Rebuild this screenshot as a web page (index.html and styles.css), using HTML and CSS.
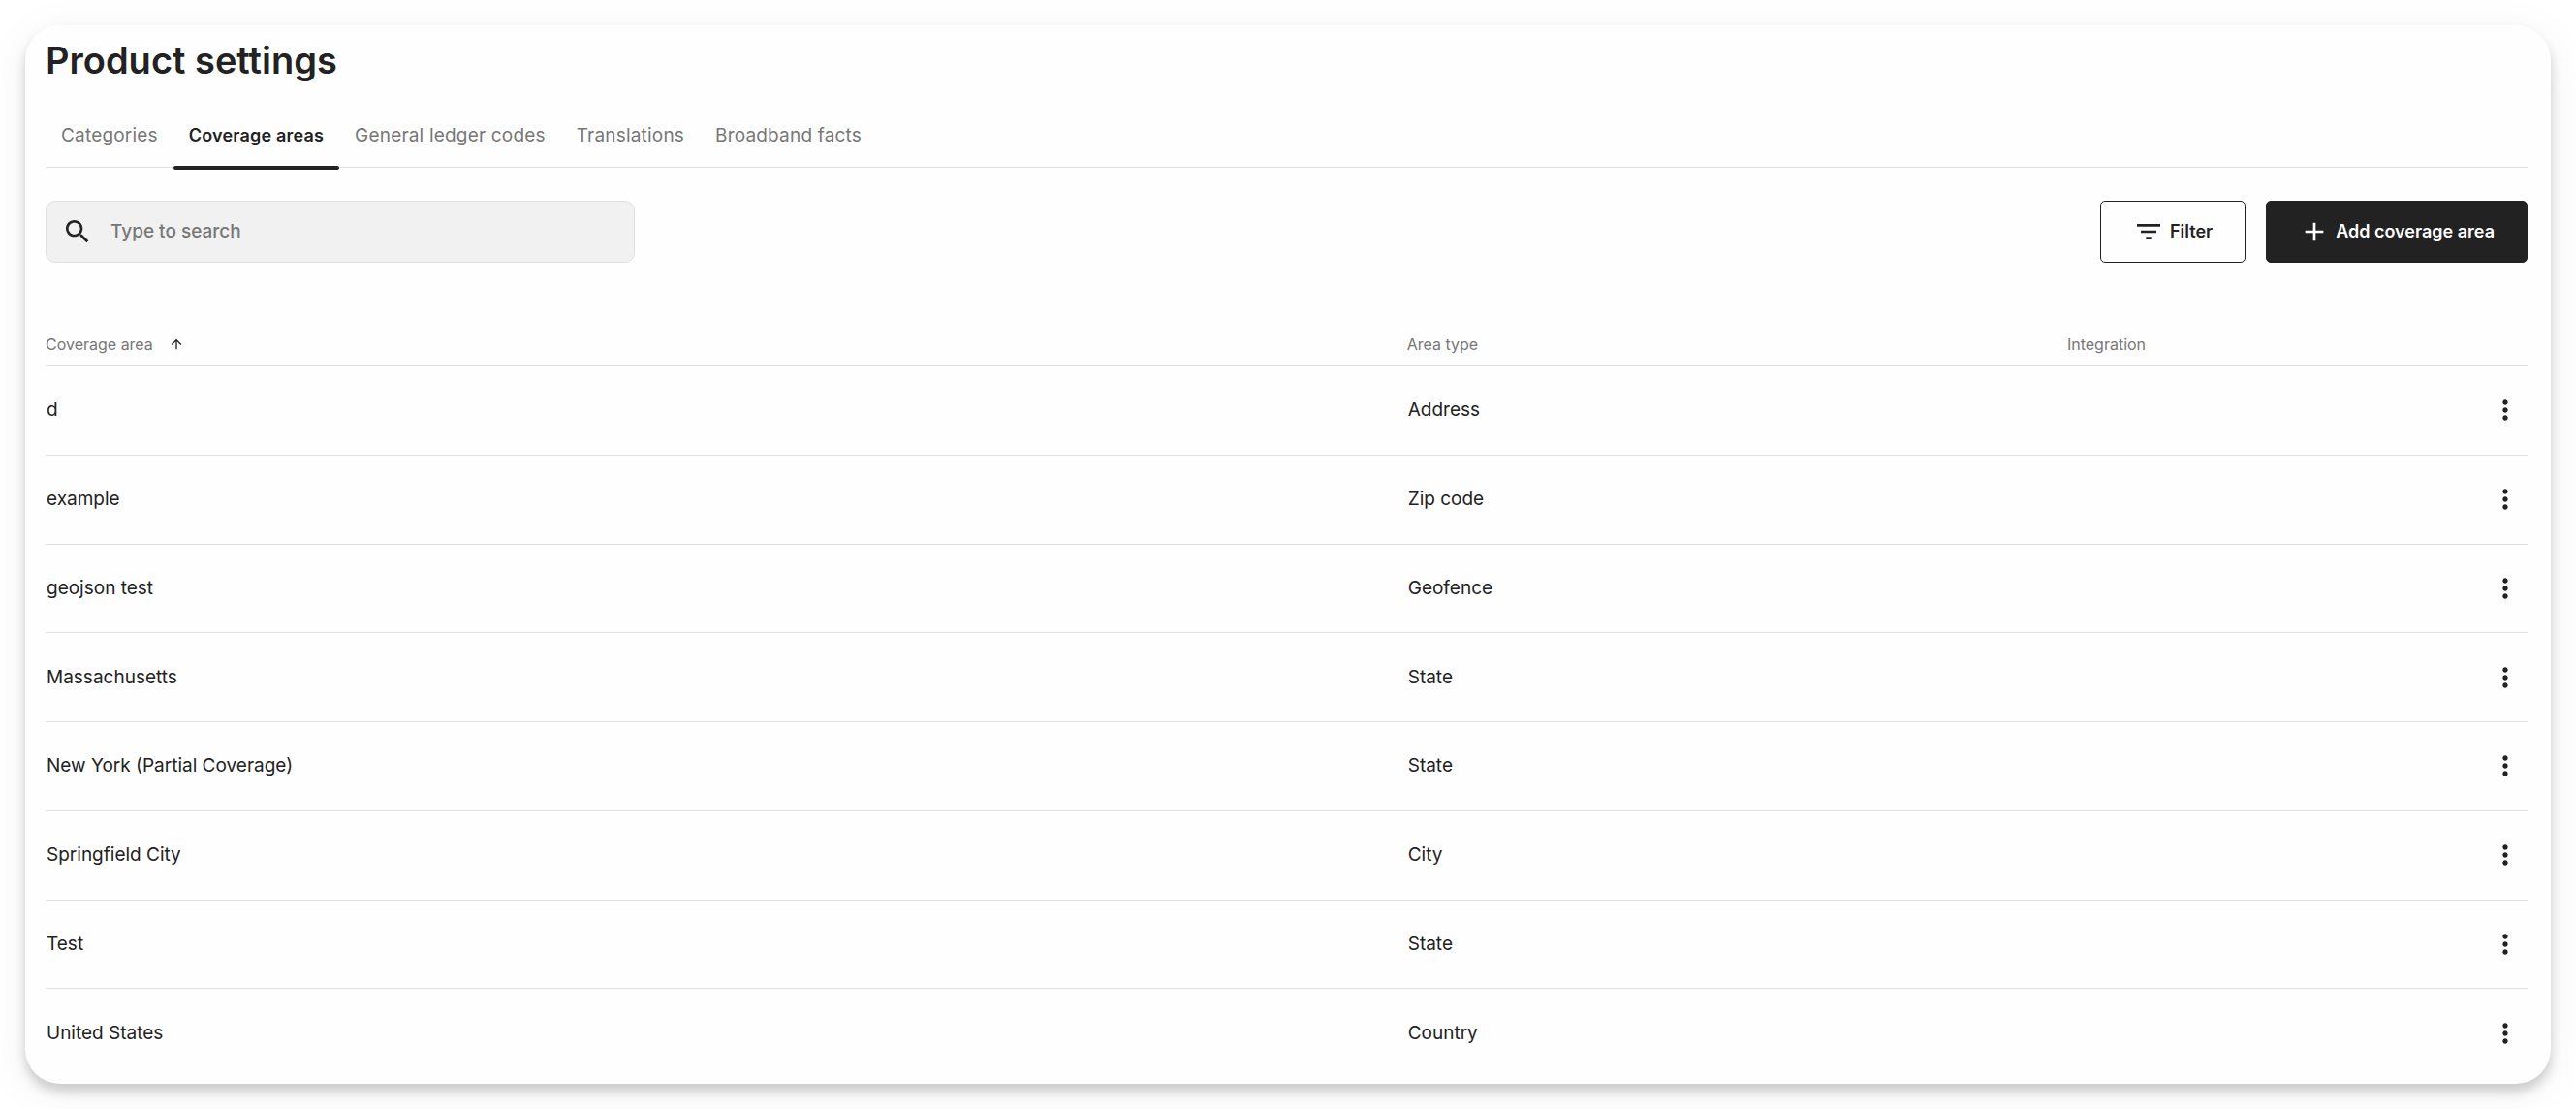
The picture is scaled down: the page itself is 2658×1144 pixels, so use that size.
FILE: index.html
```html
<!DOCTYPE html>
<html lang="en">
<head>
<meta charset="utf-8">
<title>Product settings</title>
<link rel="stylesheet" href="styles.css">
</head>
<body>
<svg class="sprite" aria-hidden="true">
  <symbol id="more" viewBox="0 0 24 24"><path d="M12 8c1.100 0 2-.9 2-2s-.9-2-2-2-2 .9-2 2 .9 2 2 2zm0 2c-1.100 0-2 .9-2 2s.9 2 2 2 2-.9 2-2-.9-2-2-2zm0 6c-1.100 0-2 .9-2 2s.9 2 2 2 2-.9 2-2-.9-2-2-2z"/></symbol>
</svg>
<main class="card">
  <h1 class="title">Product settings</h1>
  <nav class="tabs" aria-label="Product settings">
    <a class="tab" href="#categories">Categories</a>
    <a class="tab tab-active" href="#coverage" aria-current="page">Coverage areas</a>
    <a class="tab" href="#ledger">General ledger codes</a>
    <a class="tab" href="#translations">Translations</a>
    <a class="tab" href="#broadband">Broadband facts</a>
  </nav>
  <div class="toolbar">
    <label class="search">
      <svg class="icon" viewBox="0 0 24 24" aria-hidden="true"><path d="M15.500 14h-.79l-.28-.27C15.410 12.590 16 11.110 16 9.500 16 5.910 13.090 3 9.500 3S3 5.910 3 9.500 5.910 16 9.500 16c1.610 0 3.090-.59 4.230-1.570l.27.28v.79l5 4.990L20.490 19l-4.990-5zm-6 0C7.010 14 5 11.990 5 9.500S7.010 5 9.500 5 14 7.010 14 9.500 11.990 14 9.500 14z"/></svg>
      <input class="search-input" type="search" placeholder="Type to search" aria-label="Search coverage areas">
    </label>
    <div class="actions">
      <button class="button" type="button"><svg class="icon" viewBox="0 0 24 24" aria-hidden="true"><path d="M10 18h4v-2h-4v2zM3 6v2h18V6H3zm3 7h12v-2H6v2z"/></svg>Filter</button>
      <button class="button button-dark" type="button"><svg class="icon" viewBox="0 0 24 24" aria-hidden="true"><path d="M19 13h-6v6h-2v-6H5v-2h6V5h2v6h6v2z"/></svg>Add coverage area</button>
    </div>
  </div>
  <table class="table">
    <colgroup><col class="col-area"><col class="col-type"><col class="col-integration"><col class="col-menu"></colgroup>
    <thead>
      <tr>
        <th scope="col" aria-sort="ascending"><span class="sort">Coverage area<svg class="icon-sort" viewBox="0 0 24 24" aria-hidden="true"><path d="M4 12l1.410 1.410L11 7.830V20h2V7.830l5.580 5.590L20 12l-8-8-8 8z"/></svg></span></th>
        <th scope="col">Area type</th>
        <th scope="col">Integration</th>
        <td></td>
      </tr>
    </thead>
    <tbody>
      <tr><td>d</td><td>Address</td><td></td><td><button class="menu" type="button" aria-label="Actions"><svg class="icon"><use href="#more"/></svg></button></td></tr>
      <tr><td>example</td><td>Zip code</td><td></td><td><button class="menu" type="button" aria-label="Actions"><svg class="icon"><use href="#more"/></svg></button></td></tr>
      <tr><td>geojson test</td><td>Geofence</td><td></td><td><button class="menu" type="button" aria-label="Actions"><svg class="icon"><use href="#more"/></svg></button></td></tr>
      <tr><td>Massachusetts</td><td>State</td><td></td><td><button class="menu" type="button" aria-label="Actions"><svg class="icon"><use href="#more"/></svg></button></td></tr>
      <tr><td>New York (Partial Coverage)</td><td>State</td><td></td><td><button class="menu" type="button" aria-label="Actions"><svg class="icon"><use href="#more"/></svg></button></td></tr>
      <tr><td>Springfield City</td><td>City</td><td></td><td><button class="menu" type="button" aria-label="Actions"><svg class="icon"><use href="#more"/></svg></button></td></tr>
      <tr><td>Test</td><td>State</td><td></td><td><button class="menu" type="button" aria-label="Actions"><svg class="icon"><use href="#more"/></svg></button></td></tr>
      <tr><td>United States</td><td>Country</td><td></td><td><button class="menu" type="button" aria-label="Actions"><svg class="icon"><use href="#more"/></svg></button></td></tr>
    </tbody>
  </table>
</main>
</body>
</html>
```
FILE: styles.css
```css
* { box-sizing: border-box; }

body {
  margin: 0;
  padding: 26px;
  min-height: 100vh;
  display: flex;
  background: #fff;
  color: #222;
  font-family: Inter, "Liberation Sans", sans-serif;
  font-size: 19px;
  line-height: 24px;
}

.sprite { display: none; }

.card {
  flex: 1;
  min-width: 0;
  display: flex;
  flex-direction: column;
  padding: 12px 24px 6px 21px;
  border-radius: 36px;
  background: #fefefe;
  box-shadow: 0 8px 12px rgba(0, 0, 0, 0.18), 0 8px 48px rgba(0, 0, 0, 0.06);
}

.title {
  margin: 0 0 28px;
  font-size: 38px;
  line-height: 48px;
  font-weight: 600;
}

.tabs {
  display: flex;
  border-bottom: 1px solid #e0e0e0;
  letter-spacing: 0.01em;
}

.tab {
  position: relative;
  padding: 14px 16px 20px;
  color: #777;
  text-decoration: none;
}

.tab-active {
  color: #222;
  font-size: 18px;
  font-weight: 600;
}

.tab-active::after {
  content: "";
  position: absolute;
  left: 0;
  right: 0;
  bottom: -3px;
  height: 4px;
  border-radius: 2px;
  background: #222;
}

.toolbar {
  display: flex;
  justify-content: space-between;
  margin: 34px 0 64px;
}

.search {
  display: flex;
  align-items: center;
  gap: 18px;
  width: 608px;
  height: 64px;
  padding: 0 16px;
  border: 1px solid #e0e0e0;
  border-radius: 10px;
  background: #f1f1f1;
}

.search-input {
  flex: 1;
  min-width: 0;
  padding: 0;
  border: 0;
  outline: 0;
  background: none;
  color: #222;
  font: inherit;
  font-weight: 500;
}

.search-input::placeholder { color: #777; opacity: 1; }

.icon {
  flex: none;
  display: block;
  width: 32px;
  height: 32px;
  fill: currentColor;
}

.actions { display: flex; gap: 21px; }

.button {
  display: flex;
  align-items: center;
  gap: 6px;
  height: 64px;
  padding: 0 33px;
  border: 1px solid #222;
  border-radius: 5px;
  background: #fefefe;
  color: #222;
  font: inherit;
  font-size: 18px;
  font-weight: 600;
}

.button-dark { background: #222; color: #fff; }

.table {
  flex: 1;
  width: 100%;
  table-layout: fixed;
  border-collapse: separate;
  border-spacing: 0;
}

.col-area { width: 54.85%; }
.col-type { width: 26.6%; }
.col-menu { width: 48px; }

.table th,
.table thead td {
  height: 43px;
  padding: 0 0 2px;
  border-bottom: 1px solid #e0e0e0;
  color: #777;
  font-size: 16px;
  font-weight: 400;
  text-align: left;
}

.sort {
  display: flex;
  align-items: center;
  gap: 16px;
}

.icon-sort {
  width: 16px;
  height: 16px;
  fill: #222;
}

.table tbody td {
  height: 91px;
  padding: 0 0 0 1px;
  border-bottom: 1px solid #e0e0e0;
}

.table tbody tr:last-child td { border-bottom: 0; }

.menu {
  display: block;
  margin: 0 7px 0 auto;
  padding: 0;
  border: 0;
  background: none;
  color: #222;
}
```
